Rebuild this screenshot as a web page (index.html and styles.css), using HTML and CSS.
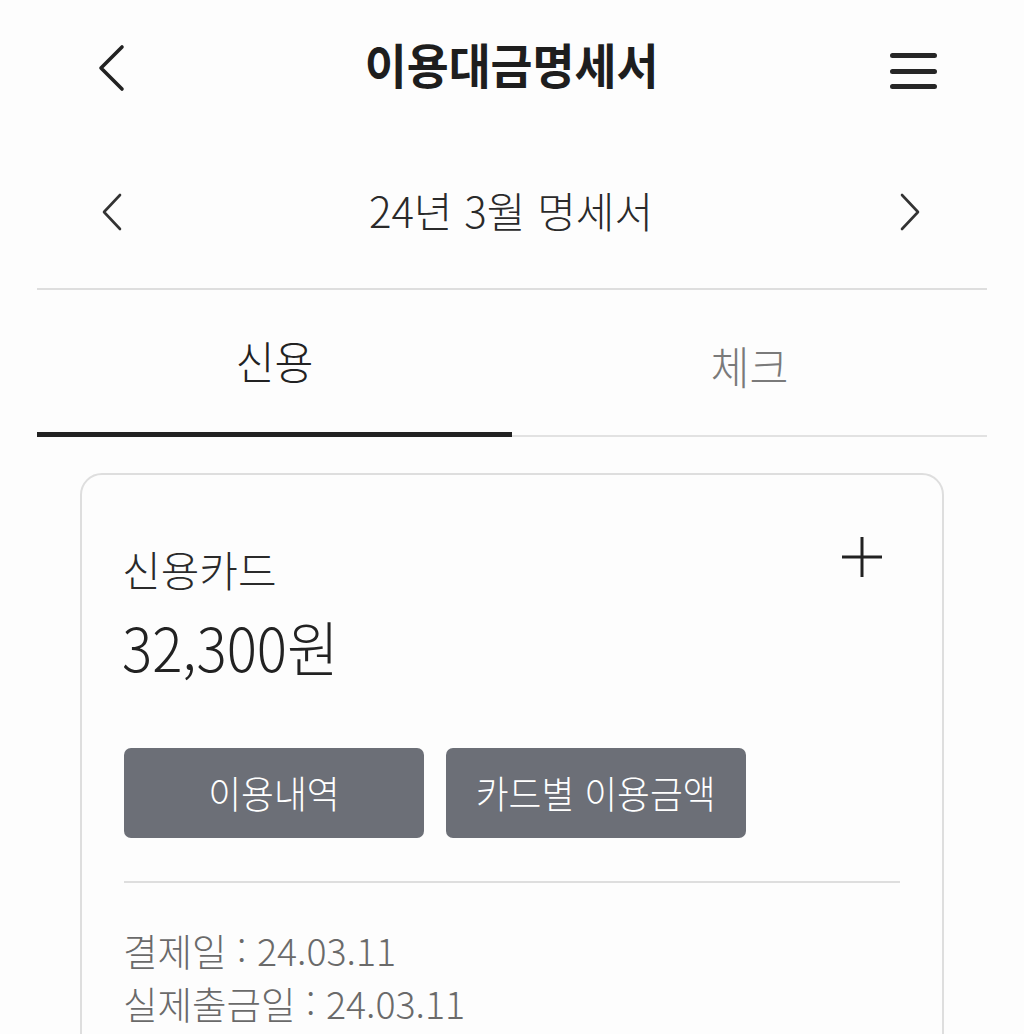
FILE: index.html
```html
<!DOCTYPE html>
<html lang="ko">
<head>
<meta charset="utf-8">
<title>이용대금명세서</title>
<link rel="stylesheet" href="styles.css">
</head>
<body>
<header class="topbar">
  <svg class="icon-back" viewBox="0 0 32 48" width="32" height="48" aria-hidden="true">
    <path d="M27 3 L6 24 L27 45" fill="none" stroke="#222" stroke-width="3.6" stroke-linecap="round" stroke-linejoin="round"/>
  </svg>
  <h1 class="title"><span class="cond-t">이용대금명세서</span></h1>
  <svg class="icon-menu" viewBox="0 0 52 44" width="52" height="44" aria-hidden="true">
    <path d="M4.5 9.5 H46.5 M4.5 25.5 H46.5 M4.5 40.5 H46.5" fill="none" stroke="#262626" stroke-width="5" stroke-linecap="round"/>
  </svg>
</header>

<div class="month-row">
  <svg class="icon-prev" viewBox="0 0 24 40" width="24" height="40" aria-hidden="true">
    <path d="M20 3 L4 20 L20 37" fill="none" stroke="#333" stroke-width="2.6" stroke-linecap="round" stroke-linejoin="round"/>
  </svg>
  <div class="month">24년 3월 명세서</div>
  <svg class="icon-next" viewBox="0 0 24 40" width="24" height="40" aria-hidden="true">
    <path d="M4 3 L20 20 L4 37" fill="none" stroke="#333" stroke-width="2.6" stroke-linecap="round" stroke-linejoin="round"/>
  </svg>
</div>

<div class="divider-top"></div>

<nav class="tabs">
  <div class="tab active"><span class="cond-tab">신용</span></div>
  <div class="tab"><span class="cond-tab">체크</span></div>
</nav>

<section class="card">
  <div class="card-head">
    <div class="card-title">신용카드</div>
    <svg class="icon-plus" viewBox="0 0 40 40" width="40" height="40" aria-hidden="true">
      <path d="M20 0 V40 M0 20 H40" fill="none" stroke="#222" stroke-width="3"/>
    </svg>
  </div>
  <div class="amount"><span class="cond-a">32,300원</span></div>
  <div class="buttons">
    <button class="btn"><span class="cond-b">이용내역</span></button>
    <button class="btn"><span class="cond-b">카드별 이용금액</span></button>
  </div>
  <div class="card-divider"></div>
  <div class="details">
    <p class="detail">결제일 : 24.03.11</p>
    <p class="detail">실제출금일 : 24.03.11</p>
  </div>
</section>
</body>
</html>
```

FILE: styles.css
```css
html, body {
  margin: 0;
  padding: 0;
  background: #fdfdfd;
}
body {
  font-family: "Noto Sans CJK KR", "Noto Sans", sans-serif;
  font-weight: 300;
  color: #222;
  overflow: hidden;
  height: 1034px;
}

.cond-t,
.cond-tab,
.cond-b {
  display: inline-block;
  transform-origin: center;
}
.cond-t { transform: scaleX(0.95); }
.cond-tab { transform: scaleX(0.94); }
.cond-b { transform: scaleX(0.94); }

.cond-a {
  display: inline-block;
  transform-origin: left center;
  transform: scaleX(0.94);
}

/* header */
.topbar {
  height: 136px;
  display: grid;
  grid-template-columns: 1fr auto 1fr;
  align-items: center;
  padding: 0 84px;
}
.icon-back {
  justify-self: start;
  margin-left: 11px;
}
.icon-menu {
  justify-self: end;
}
.title {
  margin: 0 0 10px;
  font-size: 48px;
  font-weight: 700;
  line-height: 60px;
  color: #1e1e1e;
  white-space: nowrap;
}

/* month row */
.month-row {
  height: 152px;
  display: grid;
  grid-template-columns: 1fr auto 1fr;
  align-items: center;
  padding: 0 102px 0 100px;
}
.icon-prev { justify-self: start; }
.icon-next { justify-self: end; }
.month {
  margin-bottom: 4px;
  font-size: 42px;
  line-height: 56px;
  color: #2a2a2a;
  white-space: nowrap;
}

.divider-top {
  height: 2px;
  margin: 0 37px;
  background: #dedede;
}

/* tabs */
.tabs {
  display: flex;
  align-items: flex-end;
  margin: 0 37px;
  height: 147px;
}
.tab {
  flex: 1;
  display: flex;
  align-items: center;
  justify-content: center;
  height: 140px;
  padding-bottom: 2px;
  border-bottom: 2px solid #e2e2e2;
  font-size: 45px;
  color: #7a7a7a;
  box-sizing: border-box;
}
.tab.active {
  height: 143px;
  padding-bottom: 5px;
  border-bottom: 5px solid #222;
  color: #222;
}

/* card */
.card {
  margin: 36px 80px 0;
  border: 2px solid #dedede;
  border-radius: 22px;
  padding: 62px 42px 60px;
  background: #fdfdfd;
}
.card-head {
  display: flex;
  justify-content: space-between;
  align-items: flex-start;
}
.card-title {
  margin-top: 7px;
  margin-left: -2px;
  font-size: 42px;
  line-height: 50px;
  color: #2a2a2a;
}
.icon-plus {
  margin-right: 18px;
}
.amount {
  margin-top: 20px;
  margin-left: -2px;
  font-size: 60px;
  line-height: 64px;
  color: #222;
}
.buttons {
  display: flex;
  gap: 22px;
  margin-top: 70px;
}
.btn {
  width: 300px;
  height: 90px;
  border: 0;
  border-radius: 7px;
  background: #6c6f77;
  color: #fff;
  font-family: inherit;
  font-weight: 300;
  font-size: 38px;
  padding: 0 0 4px;
}
.card-divider {
  height: 2px;
  margin-top: 43px;
  background: #dedede;
}
.details {
  margin-top: 40px;
}
.detail {
  margin: 0 0 0 -1px;
  font-size: 37.5px;
  line-height: 53px;
  color: #6a6a6a;
  white-space: nowrap;
}
```
